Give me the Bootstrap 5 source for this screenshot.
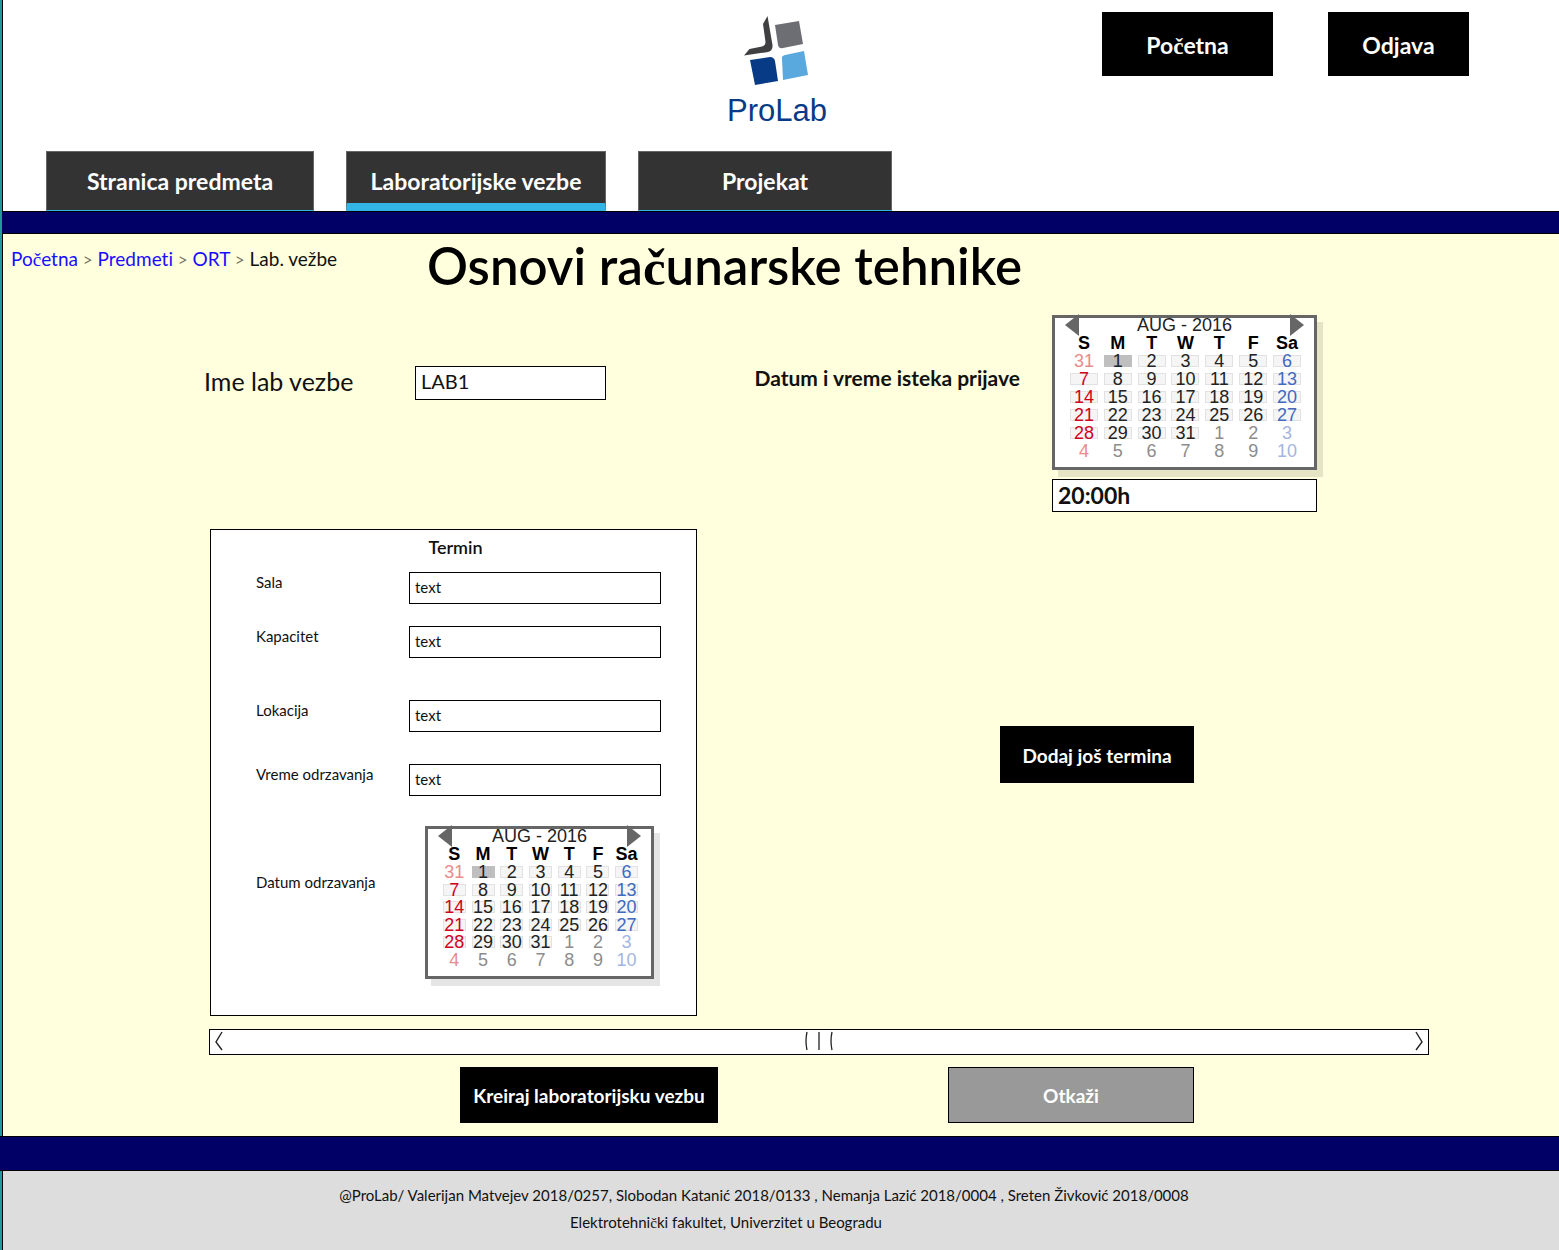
<!DOCTYPE html>
<html lang="sr-Latn">
<head>
<meta charset="utf-8">
<meta name="viewport" content="width=device-width, initial-scale=1">
<title>ProLab - Osnovi računarske tehnike</title>
<link href="https://cdn.jsdelivr.net/npm/bootstrap@5.3.0/dist/css/bootstrap.min.css" rel="stylesheet">
<style>
  :root { --navy: #006; --cream: #ffffdd; --ink: #111; }
  body { font-family: Lato, "Liberation Sans", sans-serif; font-weight: 400; color: var(--ink); background: #299; font-size: 15px; line-height: 20px; font-variant-ligatures: none; }
  .alt-c { font-family: "Liberation Serif", serif; line-height: 1; }
  .page { min-height: 100vh; }
  .edge { margin-left: 2px; border-left: 1px solid #000; }
  .site-head { background: #fff; }
  .head-top { height: 151px; padding: 12px 8px 0 0; }
  .head-side { flex: 1 1 0; padding: 0 82px; }
  .head-actions { gap: 55px; padding-left: 0; margin-left: 82px; }
  .btn-ink { background: #000; color: #fff; border: 0; border-radius: 0; font-weight: 700; font-size: 19px; line-height: 24px; padding: 2px 0 0; }
  .btn-ink:hover, .btn-cancel:hover { background: #222; color: #fff; }
  .btn-top { height: 64px; font-size: 23px; }
  .w-home { width: 171px; } .w-out { width: 141px; }
  .tabs-row { gap: 32px; padding-left: 43px; }
  .tab-item { height: 60px; background: #333; color: #fff; font-weight: 700; font-size: 23px; border: 1px solid #666; border-bottom: 1px solid #33b5e5; border-radius: 0; padding: 0; }
  .tab-item.active { background: #333; color: #fff; border-color: #666 #666 #33b5e5; border-bottom-width: 8px; padding-top: 7px; }
  .tab-item:hover { background: #333; color: #fff; }
  .tab-a { width: 268px; } .tab-b { width: 260px; } .tab-c { width: 254px; }
  .bar { background: var(--navy); border: solid #000; border-width: 1px 0; }
  .bar-top { height: 23px; } .bar-bottom { height: 35px; }
  .work { background: var(--cream); padding-bottom: 13px; }
  .crumbs { width: 424px; padding: 13px 0 0 8px; font-size: 19px; line-height: 24px; white-space: pre-wrap; }
  .crumbs a { color: #1a0dff; text-decoration: none; }
  .crumbs i { font-style: normal; color: #776; font-size: 17px; }
  .page-title { font-size: 51px; line-height: 60px; font-weight: 600; color: #000; padding-top: 2px; height: 81px; margin: 0; }
  .form-top { padding: 0 130px 0 201px; }
  .name-label { font-size: 25px; line-height: 32px; width: 211px; margin-top: 50px; }
  .box { border: 1px solid #000; border-radius: 0; background: #fff; height: 32px; padding: 0 5px 2px; color: var(--ink); font-size: 15px; font-weight: 400; line-height: 20px; }
  .box-name { width: 191px; height: 34px; font-size: 20px; margin-top: 51px; padding-bottom: 4px; }
  .due-label { font-size: 21px; line-height: 26px; font-weight: 700; margin: 50px 32px 0 auto; }
  .due-group { width: 265px; margin-right: 112px; }
  .box-time { height: 33px; font-size: 23px; font-weight: 700; margin-top: 9px; }
  .cal { border: 3px solid #666; background: #fff; box-shadow: 6px 7px 0 rgba(0,0,0,.1); font-family: "Liberation Sans", Arial, sans-serif; font-size: 18px; color: #222; }
  .cal-lg { padding: 0 10px 7px; } .cal-sm { width: 229px; padding: 0 10px 8px; }
  .cal-head { height: 16px; line-height: 16px; padding-bottom: 2px; }
  .cal-arrow { border: 0; background: none; padding: 0; line-height: 0; width: 14px; height: 22px; flex: none; }
  .cal-grid { width: 100%; line-height: 12px; padding-left: 2px; }
  .cal-row { display: grid; grid-template-columns: repeat(7, 1fr); align-items: center; justify-items: center; height: 18px; }
  .cal-sm .cal-row { height: 17px; }
  .cal-sm .cal-row:nth-child(odd) { height: 18px; }
  .cal-row > * { padding: 0; }
  .cal-row th { color: #000; }
  .day { display: flex; align-items: center; justify-content: center; width: 28px; height: 12px; padding: 0; border: 1px solid transparent; background: none; color: inherit; line-height: 12px; white-space: nowrap; }
  .cal-sm .day { width: 23px; }
  .day.in { background: #f5f5f5; border-color: #e2e2e2; }
  .day.now { background: #bfbfbf; border-color: #bfbfbf; }
  .sun { color: #d0021b; } .sat { color: #4169c0; }
  .off { color: #8c8c8c; } .sun.off { color: #e98b8b; } .sat.off { color: #a3b5e0; }
  .slots { padding: 17px 130px 0 207px; }
  .term { width: 487px; height: 487px; background: #fff; border: 1px solid #000; padding: 7px 35px 0 45px; }
  .term-title { font-size: 18px; line-height: 20px; font-weight: 600; margin: 0 0 15px 0; padding-right: 6px; text-align: center; }
  .term-line { display: flex; justify-content: space-between; align-items: flex-start; }
  .term-line .box { width: 252px; }
  .gap-s { margin-bottom: 22px; } .gap-m { margin-bottom: 32px; } .gap-l { margin-bottom: 42px; }
  .date-line { padding-right: 7px; margin-top: -2px; }
  .date-line > span { margin-top: 46px; }
  .btn-more { width: 194px; height: 57px; margin: 197px 235px 0 auto; }
  .hscroll { margin: 13px 130px 0 206px; height: 26px; background: #fff; border: 1px solid #000; padding: 0 4px 2px; }
  .hscroll button { border: 0; background: none; padding: 0; line-height: 0; }
  .actions { margin: 12px 130px 0 206px; padding: 0 235px 0 251px; }
  .actions .btn { height: 56px; }
  .btn-make { width: 258px; }
  .btn-cancel { width: 246px; background: #999; color: #fff; border: 1px solid #000; border-radius: 0; font-size: 19px; line-height: 24px; font-weight: 700; padding: 2px 0 0; }
  .site-foot { background: #ddd; padding: 11px 34px 14px 0; line-height: 27px; }
  .site-foot p { margin: 0; }
  .foot-sub { padding-right: 76px; }
</style>
<script src="https://cdn.jsdelivr.net/npm/bootstrap@5.3.0/dist/js/bootstrap.bundle.min.js"></script>
</head>
<body>
<div class="page d-flex flex-column">
  <header class="site-head edge">
    <div class="head-top d-flex align-items-start">
      <div class="head-side"></div>
      <svg width="104" height="118" viewBox="0 0 104 118" role="img" aria-label="ProLab">
        <path d="M42.5 4 47.5 33Q48 39 43 40L19 43.500 24.500 37 37 34.500Q40.500 33.500 40.500 30L38 12Z" fill="#404043"/>
        <path d="M50 13 74 9 78 32 58 36Q54 37 53 33Z" fill="#6d6e73"/>
        <path d="M25 48 45 45Q49 45 50 49L53 69 30 73Z" fill="#083b85"/>
        <path d="M57 47Q56 44 60 43L79 39 83 63 58 68Z" fill="#5aa9de"/>
        <text x="52" y="109" text-anchor="middle" font-family="Liberation Sans, Arial, sans-serif" font-size="31" fill="#083b85">ProLab</text>
      </svg>
      <div class="head-side head-actions d-flex justify-content-end">
        <button type="button" class="btn btn-ink btn-top w-home">Po<span class="alt-c">č</span>etna</button>
        <button type="button" class="btn btn-ink btn-top w-out">Odjava</button>
      </div>
    </div>
    <nav class="tabs-row d-flex" aria-label="Predmet">
      <a href="#" class="tab-item tab-a btn d-flex align-items-center justify-content-center">Stranica predmeta</a>
      <a href="#" class="tab-item tab-b btn active d-flex align-items-center justify-content-center">Laboratorijske vezbe</a>
      <a href="#" class="tab-item tab-c btn d-flex align-items-center justify-content-center">Projekat</a>
    </nav>
  </header>
  <div class="bar bar-top edge"></div>

  <main class="work edge flex-grow-1">
    <div class="d-flex">
      <nav class="crumbs" aria-label="Putanja"><a href="#">Po<span class="alt-c">č</span>etna</a> <i>&gt;</i> <a href="#">Predmeti</a> <i>&gt;</i> <a href="#">ORT</a> <i>&gt;</i> Lab. vežbe</nav>
      <h1 class="page-title">Osnovi ra<span class="alt-c">č</span>unarske tehnike</h1>
    </div>

    <form>
      <div class="form-top d-flex align-items-start">
        <label class="name-label" for="lab-name">Ime lab vezbe</label>
        <input class="box box-name" id="lab-name" type="text" value="LAB1">
        <label class="due-label" for="due-time">Datum i vreme isteka prijave</label>
        <div class="due-group">
          <div class="cal cal-lg" data-calendar></div>
          <input class="box box-time w-100" id="due-time" type="text" value="20:00h">
        </div>
      </div>

      <div class="slots d-flex align-items-start">
        <section class="term">
          <h2 class="term-title">Termin</h2>
          <div class="term-line gap-s"><label for="sala">Sala</label><input class="box" id="sala" type="text" value="text"></div>
          <div class="term-line gap-l"><label for="kap">Kapacitet</label><input class="box" id="kap" type="text" value="text"></div>
          <div class="term-line gap-m"><label for="lok">Lokacija</label><input class="box" id="lok" type="text" value="text"></div>
          <div class="term-line gap-m"><label for="vreme">Vreme odrzavanja</label><input class="box" id="vreme" type="text" value="text"></div>
          <div class="term-line date-line"><span>Datum odrzavanja</span><div class="cal cal-sm" data-calendar></div></div>
        </section>
        <button type="button" class="btn btn-ink btn-more">Dodaj još termina</button>
      </div>

      <div class="hscroll d-flex align-items-center justify-content-between">
        <button type="button" aria-label="Levo"><svg width="10" height="20" viewBox="0 0 10 20" fill="none" stroke="#222" stroke-width="1.4"><path d="M8 1 2 11 8 19"/></svg></button>
        <svg width="30" height="20" viewBox="0 0 30 20" fill="none" stroke="#222" stroke-width="1.3"><path d="M3 1Q1 10 3 19M15 1V19M28 1Q26 10 28 19"/></svg>
        <button type="button" aria-label="Desno"><svg width="10" height="20" viewBox="0 0 10 20" fill="none" stroke="#222" stroke-width="1.4"><path d="M2 1 8 11 2 19"/></svg></button>
      </div>

      <div class="actions d-flex justify-content-between">
        <button type="button" class="btn btn-ink btn-make">Kreiraj laboratorijsku vezbu</button>
        <button type="button" class="btn btn-cancel">Otkaži</button>
      </div>
    </form>
  </main>

  <div class="bar bar-bottom"></div>
  <footer class="site-foot edge text-center">
    <p>@ProLab/ Valerijan Matvejev 2018/0257, Slobodan Katanić 2018/0133 , Nemanja Lazić 2018/0004 , Sreten Živković 2018/0008</p>
    <p class="foot-sub">Elektrotehni<span class="alt-c">č</span>ki fakultet, Univerzitet u Beogradu</p>
  </footer>
</div>
<script>
  // Fill every calendar with August 2016: one leading day, 31 days, ten trailing days.
  document.querySelectorAll('[data-calendar]').forEach(function (cal) {
    var arrow = function (label, points) {
      return '<button type="button" class="cal-arrow" aria-label="' + label + '"><svg width="14" height="22" viewBox="0 0 14 22"><polygon points="' + points + '" fill="#666"/></svg></button>';
    };
    var rows = '';
    for (var w = 0; w < 6; w++) {
      rows += '<tr class="cal-row">';
      for (var d = 0; d < 7; d++) {
        var n = w * 7 + d, inside = n > 0 && n < 32;
        var label = n === 0 ? 31 : (n > 31 ? n - 31 : n);
        var cls = 'day' + (inside ? ' in' : ' off') + (n === 1 ? ' now' : '') + (d === 0 ? ' sun' : '') + (d === 6 ? ' sat' : '');
        rows += '<td><button type="button" class="' + cls + '">' + label + '</button></td>';
      }
      rows += '</tr>';
    }
    cal.innerHTML = '<div class="cal-head d-flex justify-content-between align-items-center">' +
      arrow('Prethodni mesec', '0,11 14,0 14,22') + '<span>AUG - 2016</span>' + arrow('Sledeći mesec', '14,11 0,0 0,22') + '</div>' +
      '<table class="cal-grid d-block"><thead class="d-block"><tr class="cal-row"><th>S</th><th>M</th><th>T</th><th>W</th><th>T</th><th>F</th><th>Sa</th></tr></thead><tbody class="d-block">' + rows + '</tbody></table>';
  });
</script>
</body>
</html>
